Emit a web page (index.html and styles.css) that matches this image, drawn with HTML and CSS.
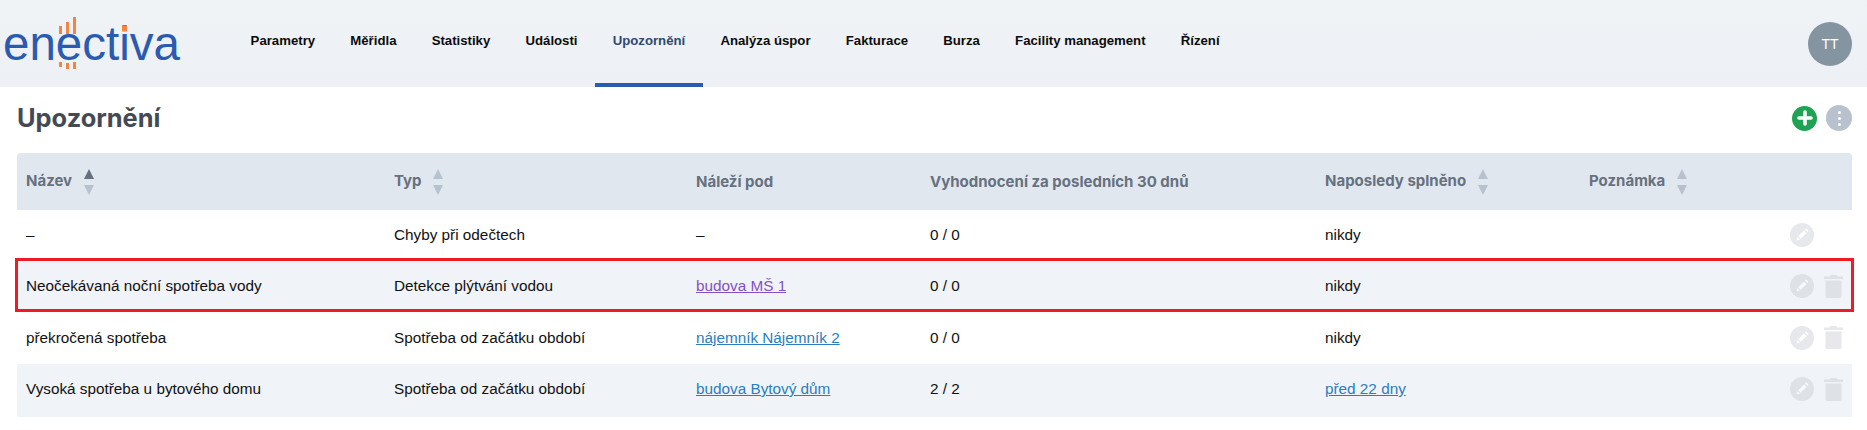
FILE: index.html
```html
<!DOCTYPE html>
<html lang="cs">
<head>
  <meta charset="UTF-8" />
  <title>Upozornění</title>
  <link rel="stylesheet" href="styles.css">
</head>
<body>

  <header class="topbar">
    <div class="logo">
      <span class="logo-text">enectiva</span>
      <svg class="logo-marks" width="190" height="87" viewBox="0 0 190 87">
        <g fill="#f58442">
          <rect x="59" y="26" width="3" height="8" />
          <rect x="66" y="22" width="3" height="12" />
          <rect x="73" y="17" width="3" height="17" />
          <rect x="59" y="62" width="3" height="5" />
          <rect x="66" y="63" width="3" height="6" />
          <rect x="73" y="62" width="3" height="7" />
          <rect x="122" y="25.500" width="5" height="6" />
        </g>
      </svg>
    </div>
    <nav class="menu">
      <a href="#">Parametry</a>
      <a href="#">Měřidla</a>
      <a href="#">Statistiky</a>
      <a href="#">Události</a>
      <a href="#" class="active">Upozornění</a>
      <a href="#">Analýza úspor</a>
      <a href="#">Fakturace</a>
      <a href="#">Burza</a>
      <a href="#">Facility management</a>
      <a href="#">Řízení</a>
    </nav>
    <div class="avatar">TT</div>
  </header>

  <main class="content">
    <div class="title-row">
      <h1>Upozornění</h1>
      <div class="actions">
        <span class="btn-add">
          <svg width="16" height="16" viewBox="0 0 16 16"><path d="M8 2v12M2 8h12" stroke="#fff" stroke-width="3.6" stroke-linecap="round" /></svg>
        </span>
        <span class="btn-more"><i></i><i></i><i></i></span>
      </div>
    </div>

    <table class="alerts">
      <thead>
        <tr>
          <th class="col-name">Název <span class="sort asc"><b></b><u></u></span></th>
          <th class="col-type">Typ <span class="sort"><b></b><u></u></span></th>
          <th class="col-owner">Náleží pod</th>
          <th class="col-eval">Vyhodnocení za posledních 30 dnů</th>
          <th class="col-last">Naposledy splněno <span class="sort"><b></b><u></u></span></th>
          <th class="col-note">Poznámka <span class="sort"><b></b><u></u></span></th>
          <th class="col-tools"></th>
        </tr>
      </thead>
      <tbody>
        <tr>
          <td>–</td>
          <td>Chyby při odečtech</td>
          <td>–</td>
          <td>0 / 0</td>
          <td>nikdy</td>
          <td></td>
          <td class="tools">
            <span class="edit"><svg width="14" height="14" viewBox="0 0 14 14"><path d="M1.500 12.500l.9-3.400 2.500 2.500zM3.200 8.300l5.900-5.900 2.500 2.500-5.900 5.900zM9.900 1.600l.8-.8c.3-.3.7-.3 1 0l1.500 1.500c.3.3.3.7 0 1l-.8.8z" fill="#fff" /></svg></span>
          </td>
        </tr>
        <tr class="flagged">
          <td>Neočekávaná noční spotřeba vody</td>
          <td>Detekce plýtvání vodou</td>
          <td><a href="#" class="visited">budova MŠ 1</a></td>
          <td>0 / 0</td>
          <td>nikdy</td>
          <td></td>
          <td class="tools">
            <span class="edit"><svg width="14" height="14" viewBox="0 0 14 14"><path d="M1.500 12.500l.9-3.400 2.500 2.500zM3.200 8.300l5.900-5.900 2.500 2.500-5.900 5.900zM9.900 1.600l.8-.8c.3-.3.7-.3 1 0l1.500 1.500c.3.3.3.7 0 1l-.8.8z" fill="#fff" /></svg></span>
            <svg class="trash" width="19" height="23" viewBox="0 0 19 23"><path d="M6.500 0h6l1 1.500h5.500v2.500h-19v-2.500h5.500zM1.500 5.500h16v15.500c0 1-.7 2-1.800 2h-12.400c-1.100 0-1.800-1-1.800-2z" /></svg>
          </td>
        </tr>
        <tr>
          <td>překročená spotřeba</td>
          <td>Spotřeba od začátku období</td>
          <td><a href="#">nájemník Nájemník 2</a></td>
          <td>0 / 0</td>
          <td>nikdy</td>
          <td></td>
          <td class="tools">
            <span class="edit"><svg width="14" height="14" viewBox="0 0 14 14"><path d="M1.500 12.500l.9-3.400 2.500 2.500zM3.200 8.300l5.900-5.900 2.500 2.500-5.900 5.900zM9.900 1.600l.8-.8c.3-.3.7-.3 1 0l1.500 1.500c.3.3.3.7 0 1l-.8.8z" fill="#fff" /></svg></span>
            <svg class="trash" width="19" height="23" viewBox="0 0 19 23"><path d="M6.500 0h6l1 1.500h5.500v2.500h-19v-2.500h5.500zM1.500 5.500h16v15.500c0 1-.7 2-1.800 2h-12.400c-1.100 0-1.800-1-1.800-2z" /></svg>
          </td>
        </tr>
        <tr>
          <td>Vysoká spotřeba u bytového domu</td>
          <td>Spotřeba od začátku období</td>
          <td><a href="#">budova Bytový dům</a></td>
          <td>2 / 2</td>
          <td><a href="#">před 22 dny</a></td>
          <td></td>
          <td class="tools">
            <span class="edit"><svg width="14" height="14" viewBox="0 0 14 14"><path d="M1.500 12.500l.9-3.400 2.500 2.500zM3.200 8.300l5.900-5.900 2.500 2.500-5.900 5.900zM9.900 1.600l.8-.8c.3-.3.7-.3 1 0l1.500 1.500c.3.3.3.7 0 1l-.8.8z" fill="#fff" /></svg></span>
            <svg class="trash" width="19" height="23" viewBox="0 0 19 23"><path d="M6.500 0h6l1 1.500h5.500v2.500h-19v-2.500h5.500zM1.500 5.500h16v15.500c0 1-.7 2-1.800 2h-12.400c-1.100 0-1.800-1-1.800-2z" /></svg>
          </td>
        </tr>
      </tbody>
    </table>
    <div class="highlight"></div>
  </main>

</body>
</html>
```

FILE: styles.css
```css
body {
  margin: 0;
  font-family: "Liberation Sans", Arial, sans-serif;
  font-size: 15.3px;
  color: #111;
  background: #fff;
}
a {
  color: #2b7dc2;
}
a.visited {
  color: #8350c8;
}

.topbar {
  display: flex;
  align-items: center;
  height: 87px;
  background: linear-gradient(#f0f3f6, #edf0f4);
}
.logo {
  position: relative;
  display: flex;
  align-items: center;
  flex: none;
  width: 233px;
  height: 87px;
  padding-left: 3px;
  box-sizing: border-box;
}
.logo-text {
  font-size: 47.5px;
  line-height: 1;
  color: #2a5bb0;
}
.logo-marks {
  position: absolute;
  left: 0;
  top: 0;
}
.menu {
  display: flex;
  flex: 1;
  height: 87px;
}
.menu a {
  display: flex;
  align-items: center;
  padding: 0 17.6px 7px;
  box-sizing: border-box;
  font-size: 13.2px;
  font-weight: bold;
  text-decoration: none;
  color: #0c0c0c;
}
.menu a.active {
  color: #2f4a6e;
  padding-bottom: 3px;
  border-bottom: 4px solid #2a5bb0;
}
.avatar {
  display: flex;
  align-items: center;
  justify-content: center;
  width: 44px;
  height: 44px;
  margin-right: 15px;
  border-radius: 50%;
  background: #8594a1;
  color: #fff;
  font-size: 14px;
}

.content {
  position: relative;
  padding: 0 15px 0 17px;
}
.title-row {
  display: flex;
  align-items: center;
  justify-content: space-between;
  height: 66px;
  padding-bottom: 4px;
  box-sizing: border-box;
}
h1 {
  margin: 0 0 2px;
  font-family: Inter, sans-serif;
  font-size: 25.4px;
  font-weight: 700;
  color: #434a54;
}
.actions {
  display: flex;
  align-items: center;
  gap: 9px;
}
.btn-add {
  display: flex;
  align-items: center;
  justify-content: center;
  width: 25px;
  height: 25px;
  border-radius: 50%;
  background: #1fa254;
}
.btn-more {
  display: flex;
  flex-direction: column;
  align-items: center;
  justify-content: center;
  gap: 3px;
  width: 26px;
  height: 26px;
  border-radius: 50%;
  background: #b8c2ce;
}
.btn-more i {
  width: 3px;
  height: 3px;
  border-radius: 50%;
  background: #fff;
}

.alerts {
  width: 100%;
  border-collapse: collapse;
  table-layout: fixed;
}
.alerts th, .alerts td {
  box-sizing: border-box;
  padding: 0 0 0 9px;
}
.alerts th {
  height: 57px;
  background: #e1e7ef;
  text-align: left;
  font-family: Inter, sans-serif;
  font-size: 15px;
  font-weight: 650;
  color: #667180;
  white-space: nowrap;
}
.alerts th:first-child {
  border-top-left-radius: 4px;
}
.alerts th:last-child {
  border-top-right-radius: 4px;
}
.alerts td {
  height: 51px;
  padding-bottom: 1px;
  color: #111;
}
.alerts tbody tr:nth-child(3) td {
  height: 52px;
}
.alerts tbody tr:nth-child(4) td {
  height: 53px;
  padding-bottom: 3px;
}
.alerts tbody tr:nth-child(even) {
  background: #f0f3f7;
}
.col-name { width: 368px; }
.col-type { width: 302px; }
.col-owner { width: 234px; }
.col-eval { width: 395px; }
.col-last { width: 264px; }
.col-note { width: 201px; }

.sort {
  display: inline-flex;
  flex-direction: column;
  gap: 6px;
  margin-left: 8px;
  vertical-align: middle;
}
.sort b, .sort u {
  width: 0;
  height: 0;
  border-left: 5.5px solid transparent;
  border-right: 5.5px solid transparent;
}
.sort b {
  border-bottom: 10px solid #b8c2ce;
}
.sort u {
  border-top: 10px solid #b8c2ce;
}
.sort.asc b {
  border-bottom-color: #667180;
}

.tools {
  white-space: nowrap;
}
.edit {
  display: inline-flex;
  align-items: center;
  justify-content: center;
  width: 24px;
  height: 24px;
  margin-right: 6px;
  border-radius: 50%;
  background: #ced3d9;
  opacity: .5;
  vertical-align: middle;
}
.trash {
  fill: #ced3d9;
  opacity: .5;
  vertical-align: middle;
}
.highlight {
  position: absolute;
  left: 15px;
  top: 171px;
  right: 13px;
  height: 54px;
  border: 3px solid #ed1c24;
  box-sizing: border-box;
  pointer-events: none;
}
```
